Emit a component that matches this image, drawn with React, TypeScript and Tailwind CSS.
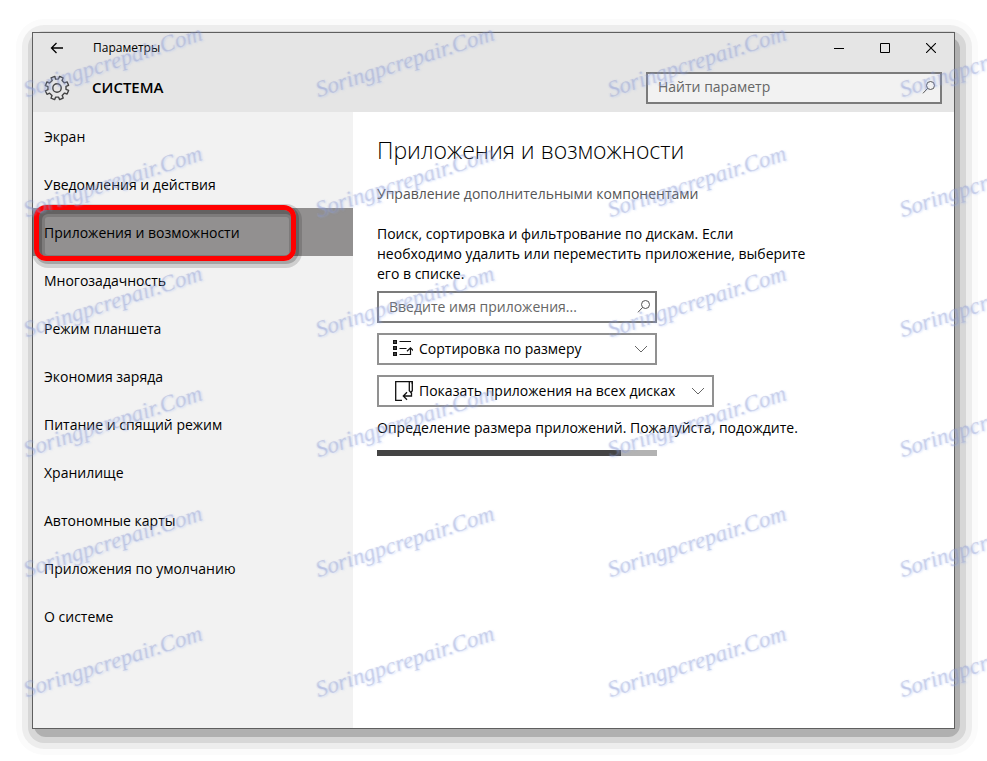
import type { ReactNode } from "react";

const sections = [
  "Экран",
  "Уведомления и действия",
  "Приложения и возможности",
  "Многозадачность",
  "Режим планшета",
  "Экономия заряда",
  "Питание и спящий режим",
  "Хранилище",
  "Автономные карты",
  "Приложения по умолчанию",
  "О системе",
];

const activeSection = "Приложения и возможности";

const SearchIcon = () => (
  <svg className="pointer-events-none absolute right-1.5 top-2 size-3.5" viewBox="0 0 14 14" fill="none" stroke="#555" aria-hidden="true">
    <circle cx="8.5" cy="5.5" r="4" />
    <path d="M5.6 8.4 1 13.3" />
  </svg>
);

const GearIcon = () => (
  <svg className="size-[26px]" viewBox="0 0 26 26" fill="none" stroke="#444" strokeWidth="1.4" strokeLinejoin="round" aria-hidden="true">
    <circle cx="13" cy="13" r="4.2" />
    <path d="M11.5 4.1 10.9 1.4 7.1 2.8 8.2 5.5 5.6 8 3 6.9 1.4 10.6 4 11.6V14.6L1.3 15.8 3 19.3 5.6 18.2 8 20.5 7 23.2 10.6 24.6 11.7 22.1H14.5L15.7 24.6 19.2 23 18.2 20.4 20.5 18.1 23.1 19 24.6 15.4 22 14.3V11.4L24.6 10.3 23.1 6.9 20.4 7.9 18.1 5.6 19.1 2.9 15.6 1.4 14.4 4Z" />
  </svg>
);

const SortIcon = () => (
  <svg className="size-5" viewBox="0 0 20 20" fill="none" stroke="#111" aria-hidden="true">
    <path strokeWidth="1.6" d="M.8 1.8h2.4v2.4H.8zM.8 7.8h2.4v2.4H.8zM.8 13.8h2.4v2.4H.8z" />
    <path strokeWidth="1.2" d="M6.5 2.5H18M6.5 9.5h7M6.5 15.5h11V9M14 12.2l3.5-3.4 3 3" />
  </svg>
);

const DriveIcon = () => (
  <svg className="size-5" viewBox="0 0 20 20" fill="none" stroke="#111" strokeWidth="1.3" aria-hidden="true">
    <path d="M9 19.3H2.7V.7h16.6V3" />
    <path d="M16.3.7v9l1.6 1.8 1.4-1.8v-9" />
    <path d="M18.5 11.5V15H10.5M14 11.3 10.3 15l3.7 3.7" />
  </svg>
);

const Search = ({ id, label, className }: { id: string; label: string; className: string }) => (
  <div className={`relative ${className}`}>
    <label htmlFor={id} className="sr-only">{label}</label>
    <input
      id={id}
      type="text"
      placeholder={label}
      className="block h-8 w-full border-2 border-[#7b7b7b] bg-white/50 pb-0.5 pl-2.5 pr-7 text-sm text-black outline-none placeholder:text-[#666]"
    />
    <SearchIcon />
  </div>
);

const Dropdown = ({ id, label, value, icon, className }: { id: string; label: string; value: string; icon: ReactNode; className: string }) => (
  <div className={`relative ${className}`}>
    <label htmlFor={id} className="sr-only">{label}</label>
    <select id={id} className="block h-8 w-full appearance-none border-2 border-[#919191] bg-white pl-10 pr-8 text-sm text-black outline-none">
      <option>{value}</option>
    </select>
    <span className="pointer-events-none absolute left-4 top-1.5">{icon}</span>
    <svg className="pointer-events-none absolute right-2 top-3 h-2 w-4" viewBox="0 0 16 8" fill="none" stroke="#666" aria-hidden="true">
      <path d="m2 1 6 6 6-6" />
    </svg>
  </div>
);

const TitleBar = () => (
  <div className="flex h-[30px] items-center">
    <button type="button" aria-label="Назад" className="flex h-full w-12 items-center justify-center">
      <svg className="h-3 w-3.5" viewBox="0 0 14 12" fill="none" stroke="#000" strokeWidth="1.3" aria-hidden="true">
        <path d="M13 6H1.5M6.5 1l-5 5 5 5" />
      </svg>
    </button>
    <span className="pl-3 text-xs">Параметры</span>
    <div className="ml-auto flex h-full">
      <button type="button" aria-label="Свернуть" className="flex w-[46px] items-center justify-center">
        <svg className="size-2.5" viewBox="0 0 10 10" stroke="#000" aria-hidden="true"><path d="M0 5.5h10" /></svg>
      </button>
      <button type="button" aria-label="Развернуть" className="flex w-[46px] items-center justify-center">
        <svg className="size-2.5" viewBox="0 0 10 10" fill="none" stroke="#000" aria-hidden="true"><path d="M.5.5h9v9h-9z" /></svg>
      </button>
      <button type="button" aria-label="Закрыть" className="flex w-[46px] items-center justify-center">
        <svg className="size-2.5" viewBox="0 0 10 10" stroke="#000" strokeWidth="1.1" aria-hidden="true"><path d="m0 0 10 10M10 0 0 10" /></svg>
      </button>
    </div>
  </div>
);

const Sidebar = () => (
  <nav className="w-80 shrink-0 bg-[#f2f2f2]">
    <ul>
      {sections.map((name) => {
        const active = name === activeSection;
        return (
          <li key={name} className={active ? "relative bg-[#929090]" : ""}>
            {active && (
              <span
                aria-hidden="true"
                className="absolute -top-[3px] left-px h-14 w-[262px] rounded-xl border-[5px] border-[#ff0000] shadow-[2px_2px_0_1px_rgba(0,0,0,0.2),2px_3px_0_4px_rgba(0,0,0,0.14),inset_2px_3px_0_1px_rgba(0,0,0,0.2),inset_2px_3px_0_4px_rgba(0,0,0,0.14)]"
              />
            )}
            <a href="#" className="relative flex h-12 items-center pt-0.5 pl-[11px] text-sm">{name}</a>
          </li>
        );
      })}
    </ul>
  </nav>
);

const Watermark = () => (
  <div aria-hidden="true" className="pointer-events-none absolute inset-0 grid auto-rows-[120px] grid-cols-[repeat(4,292px)] overflow-hidden pl-7">
    {Array.from({ length: 24 }, (_, i) => (
      <span
        key={i}
        className="mb-[18px] origin-bottom-left -rotate-[18deg] self-end justify-self-start font-['Liberation_Serif',serif] text-[23px] leading-6 text-[#8085b8]/25 italic [text-shadow:1px_1px_2px_rgba(150,175,240,0.35),-1px_0_1px_rgba(160,185,245,0.2)]"
      >
        Soringpcrepair.Com
      </span>
    ))}
  </div>
);

export default function App() {
  return (
    <div className="relative flex min-h-screen overflow-hidden bg-white pt-[19px] pr-[9px] pb-1.5 pl-4 font-['Open_Sans',sans-serif] text-black">
      {/* Stepped shadow */}
      <div className="flex flex-1 rounded-[28px] bg-[#fbfbfb] p-1.5">
        <div className="flex flex-1 rounded-[22px] bg-[#ededed] p-1.5">
          <div className="flex flex-1 rounded-2xl bg-[#d7d7d7] p-1.5">
            <div className="flex flex-1 rounded-xl bg-[#b0b0b0]">
              {/* Window */}
              <div className="-mt-[5px] mr-[5px] mb-2 -ml-0.5 flex flex-1 flex-col border border-[#5f5f5f] bg-white">
                <header className="bg-[#e5e5e5]">
                  <TitleBar />
                  <div className="flex h-[49px] items-center pr-3">
                    <span className="flex w-12 justify-center"><GearIcon /></span>
                    <span className="pl-[11px] text-[15px] font-semibold">СИСТЕМА</span>
                    <Search id="find-setting" label="Найти параметр" className="ml-auto w-[296px]" />
                  </div>
                </header>
                <div className="flex flex-1">
                  <Sidebar />
                  <main className="flex-1 px-6 pt-[18px] text-sm leading-5">
                    <h1 className="text-[23px] leading-10 font-light">Приложения и возможности</h1>
                    <a href="#" className="mt-3.5 block text-[#555]">Управление дополнительными компонентами</a>
                    <p className="mt-5 max-w-[440px]">
                      Поиск, сортировка и фильтрование по дискам. Если необходимо удалить или переместить приложение, выберите его в списке.
                    </p>
                    <div className="mt-[7px] flex flex-col gap-2.5">
                      <Search id="app-name" label="Введите имя приложения..." className="w-[280px]" />
                      <Dropdown id="sort" label="Сортировка" value="Сортировка по размеру" icon={<SortIcon />} className="w-[280px]" />
                      <Dropdown id="drives" label="Диски" value="Показать приложения на всех дисках" icon={<DriveIcon />} className="w-[337px]" />
                    </div>
                    <p className="mt-[11px]">Определение размера приложений. Пожалуйста, подождите.</p>
                    <div role="progressbar" aria-label="Определение размера" aria-valuenow={87} className="mt-3 h-1.5 w-[280px] bg-[#b3b3b3]">
                      <div className="h-full w-[87%] bg-[#444]" />
                    </div>
                  </main>
                </div>
              </div>
            </div>
          </div>
        </div>
      </div>
      <Watermark />
    </div>
  );
}
